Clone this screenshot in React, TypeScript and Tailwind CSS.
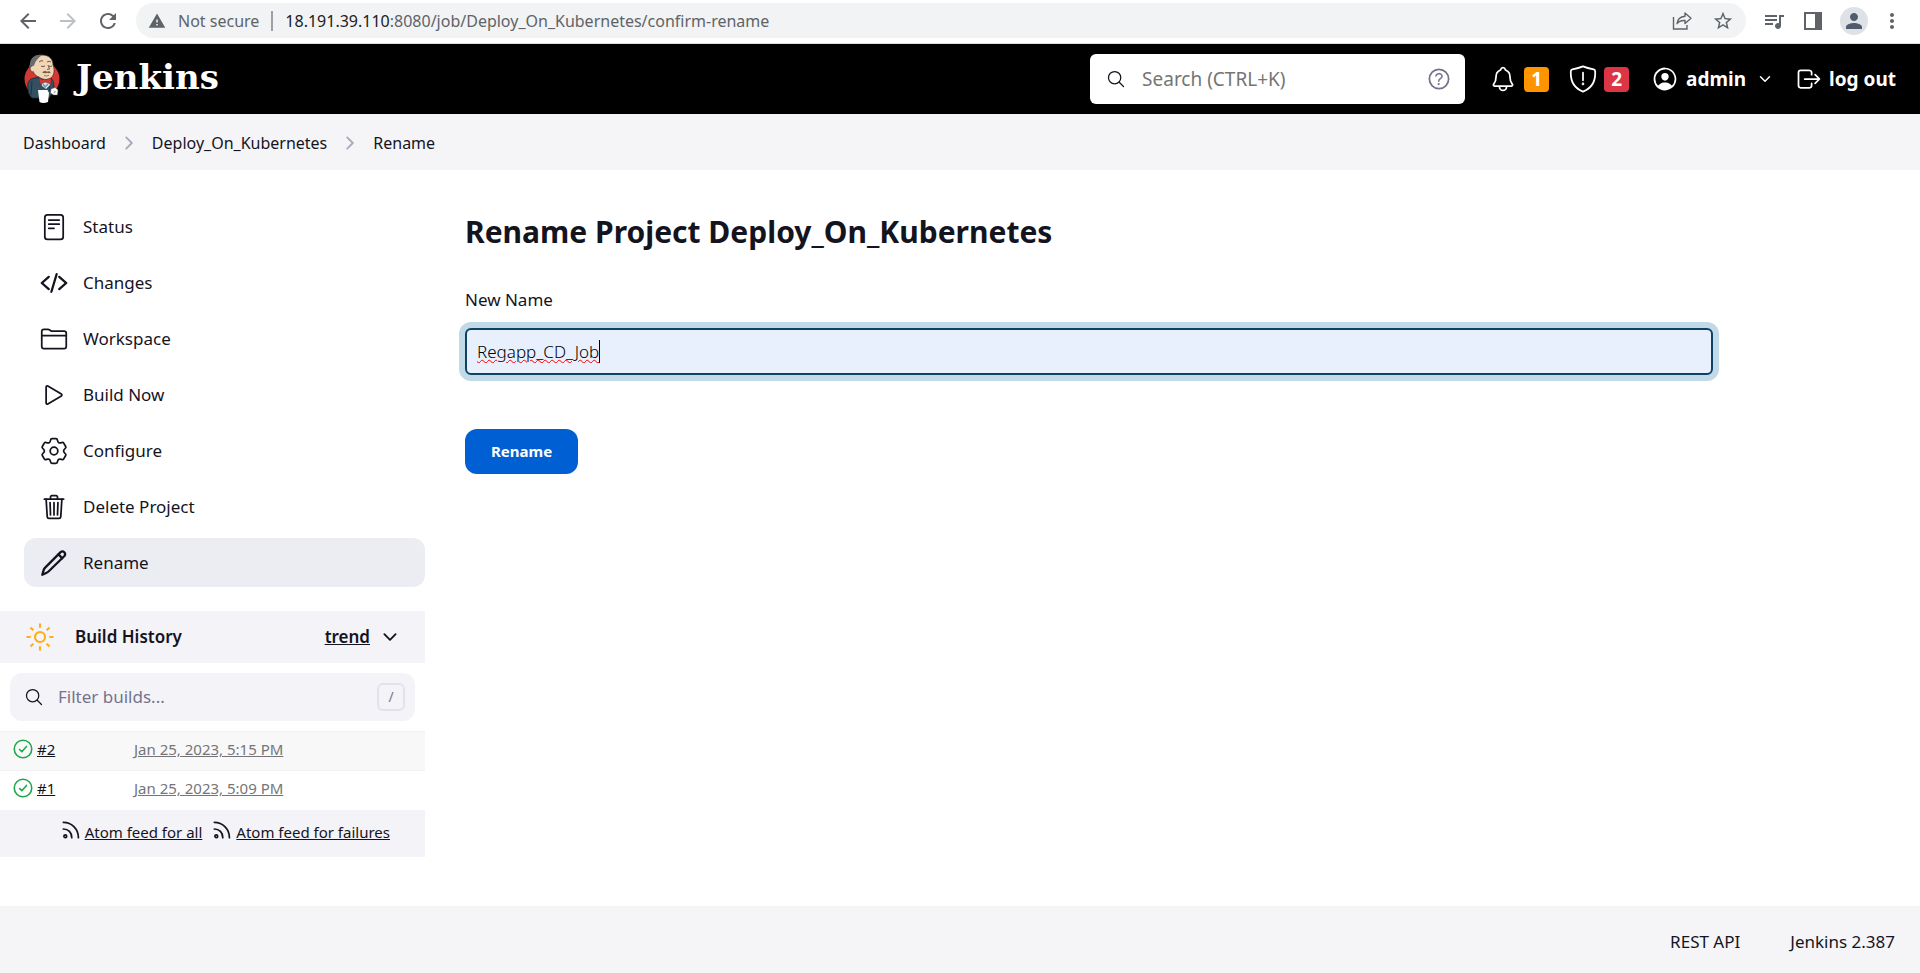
import React, { useState } from "react";
import { IoCodeSlash, IoPlayOutline, IoTrashOutline, IoFolderOutline, IoSearchOutline, IoHelpCircleOutline, IoNotificationsOutline, IoLogOutOutline, IoPersonCircleOutline } from "react-icons/io5";
import { MdArrowBack, MdArrowForward, MdRefresh, MdWarning, MdStarBorder, MdQueueMusic, MdPerson, MdMoreVert } from "react-icons/md";

type IconProps = { className?: string; children: React.ReactNode; width?: number };

function Line({ className = "size-7", children, width = 32 }: IconProps) {
  return (
    <svg viewBox="0 0 512 512" className={className} fill="none" stroke="currentColor" strokeWidth={width} strokeLinecap="round" strokeLinejoin="round" aria-hidden="true">
      {children}
    </svg>
  );
}

const StatusIcon = () => (
  <Line className="size-7">
    <rect x="88" y="32" width="336" height="448" rx="48" />
    <path d="M160 128h192M160 204h192M160 280h96" />
  </Line>
);

// Six identical teeth, each one drawn by rotating the same points around the centre.
function gearPath() {
  let d = "";
  for (let k = 0; k < 6; k++) {
    const a = (k * Math.PI) / 3;
    const p = (x: number, y: number) => `${(256 + x * Math.cos(a) - y * Math.sin(a)).toFixed(1)} ${(256 + x * Math.sin(a) + y * Math.cos(a)).toFixed(1)}`;
    d += `${k === 0 ? "M" : "L"}${p(-64, -196)}Q${p(-60, -226)} ${p(-36, -226)}L${p(36, -226)}Q${p(60, -226)} ${p(64, -196)}Q${p(75, -130)} ${p(137.7, -153.4)}`;
  }
  return d + "Z";
}

const GearIcon = () => (
  <Line className="size-7">
    <circle cx="256" cy="256" r="70" />
    <path d={gearPath()} />
  </Line>
);

const PencilIcon = () => (
  <Line className="size-7" width={42}>
    <path d="M42 470l26-88c5-16 11-26 22-37L372 62c22-20 54-20 72-2 18 20 18 50-2 72L156 412c-11 11-20 17-34 22z" />
    <path d="M338 98l68 70" />
  </Line>
);

const SunIcon = () => (
  <Line className="size-7 text-[#ffae12]" width={38}>
    <circle cx="256" cy="256" r="92" />
    <path strokeLinecap="butt" d="M256 10v76M256 426v76M502 256h-76M86 256H10M430 82l-52 52M134 378l-52 52M430 430l-52-52M134 134L82 82" />
  </Line>
);

const RssIcon = () => (
  <Line className="mb-1 size-5" width={44}>
    <circle cx="110" cy="416" r="36" />
    <path d="M60 230c130 0 216 92 216 222M60 60c220 0 386 172 386 392" />
  </Line>
);

const CheckIcon = () => (
  <Line className="size-5 shrink-0 text-[#1ea64b]" width={40}>
    <circle cx="256" cy="256" r="224" />
    <path d="M346 190L226 324l-58-54" />
  </Line>
);

const Chevron = ({ className, right }: { className: string; right?: boolean }) => (
  <Line className={className} width={48}>
    <path d={right ? "M184 112l144 144-144 144" : "M112 184l144 144 144-144"} />
  </Line>
);

const ShieldIcon = () => (
  <Line className="size-7" width={32}>
    <path d="M478 108c-3-18-12-27-28-30C356 62 314 50 256 26 198 50 156 62 62 78c-16 3-25 12-28 30-14 210 66 318 222 378 156-60 236-168 222-378z" />
    <path d="M256 140v140" />
    <circle cx="256" cy="346" r="8" fill="currentColor" />
  </Line>
);

const ShareIcon = () => (
  <svg viewBox="0 0 20 20" className="size-5" fill="none" stroke="currentColor" strokeWidth="1.4" aria-hidden="true">
    <path d="M1.5 6v12h13.500v-4" />
    <path strokeLinejoin="round" d="M13 2l6 5.300-6 5.300V9.500c-4-.2-6.500.8-8 3.200.4-4.300 3-7 8-7.500z" />
  </svg>
);

const PanelIcon = () => (
  <svg viewBox="0 0 18 18" className="size-[18px]" fill="currentColor" aria-hidden="true">
    <path d="M0 0h18v18H0zM2 2v14h9V2z" fillRule="evenodd" />
  </svg>
);

function JenkinsMascot() {
  return (
    <svg viewBox="0 0 36 50" className="h-[50px] w-9" aria-hidden="true">
      <circle cx="18" cy="25" r="17.500" fill="#d33833" />
      <path d="M7 25c-3 2-4 6-3 9 0 4 1 7 4 10l17 0 5-8c0-5 0-9-3-12l-9-2z" fill="#335061" stroke="#1b2b38" strokeWidth=".8" />
      <path d="M8 27l-1 14M25 30l1 8" stroke="#1b2b38" strokeWidth=".8" />
      <path d="M17 26l8 0 1 5-4 4-4-3z" fill="#d7e4ea" />
      <path d="M6 11C7 5 12 1 18 1c7 0 11 4 11 10 2 5 1 10-2 13-3 2-8 2-12-1-3-1-5-3-6-6-3 0-4-3-3-6z" fill="#f0d6b7" stroke="#4a3b34" strokeWidth=".7" />
      <path d="M18 1C12 0 7 3 6 9c-.5 4 0 6 1.500 7 0-3 1-5 2.500-4C11 8 13 5 18 1z" fill="#6b6a6d" />
      <path d="M8 12c-3 1-2 6 1.500 6" fill="#f0d6b7" stroke="#4a3b34" strokeWidth=".7" />
      <path d="M15 8q2-2 4-1M23 8q2-1.500 4 0M17 12q2 1.200 4 0M25 12q1 1 3 0M24 11l1.500 4-2.500.5" fill="none" stroke="#4a3b34" strokeWidth=".8" />
      <path d="M18 18.500q3-2.500 5-.8 2-1 4 .8-2.500 1.200-4 .3-2 1.200-5-.3z" fill="#7c5a46" />
      <path d="M20 21.500q2.500 1.200 5-.2" fill="none" stroke="#8d5b49" strokeWidth=".8" />
      <path d="M15 24l5 2.500 7-2.500v6l-6-2-5 2.500z" fill="#d33833" stroke="#81201e" strokeWidth=".5" />
      <path d="M19 30l2 3 3-3" fill="none" stroke="#6d9bb3" strokeWidth="1.500" />
      <path d="M14 36h9.500l1.500 3-1 9q-5 2-8.500 0z" fill="#fff" />
      <path d="M27 35l4-1.500 3 2.500-.5 5-4 0-3-2z" fill="#fff" stroke="#555" strokeWidth=".5" />
      <path d="M30 36.500l1.500 1.500-2 1" fill="none" stroke="#555" strokeWidth=".6" />
    </svg>
  );
}

const tasks = [
  { label: "Status", icon: <StatusIcon /> },
  { label: "Changes", icon: <IoCodeSlash className="size-7" /> },
  { label: "Workspace", icon: <IoFolderOutline className="size-7" /> },
  { label: "Build Now", icon: <IoPlayOutline className="size-7" /> },
  { label: "Configure", icon: <GearIcon /> },
  { label: "Delete Project", icon: <IoTrashOutline className="size-7" /> },
  { label: "Rename", icon: <PencilIcon />, active: true },
];

const builds = [
  { id: "#2", date: "Jan 25, 2023, 5:15 PM", row: "bg-[#f8f8f8]" },
  { id: "#1", date: "Jan 25, 2023, 5:09 PM", row: "bg-white" },
];

function BrowserBar() {
  return (
    <div className="flex h-11 items-center border-b border-[#dadce0] px-4 pb-0.5 text-[#5f6368]">
      <div className="flex gap-4 pr-4">
        <button aria-label="Back"><MdArrowBack className="size-6" /></button>
        <button aria-label="Forward" className="text-[#bdc1c6]"><MdArrowForward className="size-6" /></button>
        <button aria-label="Reload"><MdRefresh className="size-6" /></button>
      </div>
      <div className="flex h-[35px] min-w-0 grow items-center rounded-full bg-[#f1f3f4] px-3">
        <MdWarning className="mr-3 size-[18px] shrink-0" />
        <span className="whitespace-nowrap text-base">Not secure</span>
        <span className="mx-3 h-5 w-0.5 shrink-0 bg-[#9aa0a6]" />
        <span className="grow truncate text-base"><span className="text-[#202124]">18.191.39.110</span>:8080/job/Deploy_On_Kubernetes/confirm-rename</span>
        <div className="flex gap-5">
          <button aria-label="Share"><ShareIcon /></button>
          <button aria-label="Bookmark"><MdStarBorder className="size-[22px]" /></button>
        </div>
      </div>
      <div className="flex items-center gap-[18px] pl-4">
        <button aria-label="Media"><MdQueueMusic className="size-6" /></button>
        <button aria-label="Side panel"><PanelIcon /></button>
        <button aria-label="Profile" className="flex size-7 items-center justify-center rounded-full bg-[#dee1e6] text-[#4f5b6e]"><MdPerson className="size-6" /></button>
        <button aria-label="Menu" className="-ml-1.5"><MdMoreVert className="size-6" /></button>
      </div>
    </div>
  );
}

function Header() {
  return (
    <header className="flex h-[70px] items-center bg-black px-6 text-white">
      <a href="#" className="flex items-center gap-4">
        <JenkinsMascot />
        <span className="pb-1 font-['DejaVu_Serif',serif] text-[34px] leading-[46px] font-bold">Jenkins</span>
      </a>
      <div className="ml-auto flex h-[50px] w-[375px] items-center rounded-md bg-white px-3 text-[#14141f]">
        <IoSearchOutline className="mr-4 ml-1 size-5 shrink-0" />
        <input aria-label="Search" placeholder="Search (CTRL+K)" className="min-w-0 grow text-[19px] outline-none placeholder:text-[#757575]" />
        <a href="#" aria-label="Help" className="text-[#73738c]"><IoHelpCircleOutline className="size-7" /></a>
      </div>
      <a href="#" className="ml-6 flex items-center gap-[7px]">
        <IoNotificationsOutline className="size-7" />
        <span className="flex size-[25px] items-center justify-center rounded bg-[#fe9500] text-[19px] font-bold">1</span>
      </a>
      <a href="#" className="ml-5 flex items-center gap-[7px]">
        <ShieldIcon />
        <span className="flex size-[25px] items-center justify-center rounded bg-[#dc3545] text-[19px] font-bold">2</span>
      </a>
      <a href="#" className="ml-[22px] flex items-center gap-[7px] text-[19px] font-bold">
        <IoPersonCircleOutline className="size-7" />
        admin
        <Chevron className="ml-1 size-4" />
      </a>
      <a href="#" className="ml-[22px] flex items-center gap-1.5 text-[19px] font-bold">
        <IoLogOutOutline className="size-7" />
        log out
      </a>
    </header>
  );
}

function Sidebar() {
  return (
    <aside className="w-[425px] shrink-0">
      <nav className="flex flex-col gap-[7px] pt-8 pl-6">
        {tasks.map((t) => (
          <a key={t.label} href="#" className={t.active ? "flex h-[49px] items-center gap-[15px] rounded-xl bg-[#ecedf3] pl-4" : "flex h-[49px] items-center gap-[15px] rounded-xl pl-4"}>
            {t.icon}
            <span className="text-[17px]">{t.label}</span>
          </a>
        ))}
      </nav>
      <section className="mt-6">
        <div className="flex h-[52px] items-center bg-[#f3f3f8] pr-[25px] pl-[26px] text-[17px] font-semibold">
          <SunIcon />
          <h2 className="ml-[21px] grow">Build History</h2>
          <a href="#" className="underline">trend</a>
          <button aria-label="Collapse" className="ml-2.5"><Chevron className="size-5" /></button>
        </div>
        <div className="mx-2.5 mt-2.5 mb-2.5 flex h-12 items-center rounded-xl bg-[#f3f3f8] px-2.5">
          <IoSearchOutline className="mr-3.5 ml-1 size-5 shrink-0" />
          <input aria-label="Filter builds" placeholder="Filter builds..." className="min-w-0 grow text-[17px] outline-none placeholder:text-[#73738c]" />
          <kbd className="flex size-7 items-center justify-center rounded-md border-2 border-[#e2e2ec] font-sans text-sm text-[#73738c]">/</kbd>
        </div>
        <table className="w-full text-[15px]">
          <tbody>
            {builds.map((b) => (
              <tr key={b.id} className={b.row}>
                <td className="h-[39px] w-[134px] border-t border-[#f1f1f3] pb-1 pl-[13px]">
                  <a href="#" className="flex items-center gap-1"><CheckIcon /><span className="underline">{b.id}</span></a>
                </td>
                <td className="border-t border-[#f1f1f3] pb-1"><a href="#" className="text-[#757579] underline">{b.date}</a></td>
              </tr>
            ))}
          </tbody>
        </table>
        <div className="flex h-[47px] items-center justify-end gap-2.5 bg-[#f3f3f8] pr-[35px] pb-0.5 text-[15px]">
          <a href="#" className="flex items-center gap-1"><RssIcon /><span className="underline">Atom feed for all</span></a>
          <a href="#" className="flex items-center gap-1"><RssIcon /><span className="underline">Atom feed for failures</span></a>
        </div>
      </section>
    </aside>
  );
}

export default function App() {
  const [name, setName] = useState("Regapp_CD_Job");
  return (
    <div className="flex min-h-screen flex-col bg-white font-['Noto_Sans',sans-serif] text-[#14141f]">
      <BrowserBar />
      <Header />
      <nav aria-label="Breadcrumbs" className="flex h-14 items-center bg-[#f5f5f8] px-[23px] pt-0.5 text-base">
        <a href="#">Dashboard</a>
        <Chevron right className="mx-[13px] size-5 text-[#aaaabb]" />
        <a href="#">Deploy_On_Kubernetes</a>
        <Chevron right className="mx-[13px] size-5 text-[#aaaabb]" />
        <a href="#">Rename</a>
      </nav>
      <div className="flex grow">
        <Sidebar />
        <main className="min-w-0 grow pt-10 pl-10">
          <h1 className="text-3xl leading-[44px] font-bold">Rename Project Deploy_On_Kubernetes</h1>
          <form onSubmit={(e) => e.preventDefault()}>
            <label htmlFor="new-name" className="mt-8 block text-[17px] leading-7">New Name</label>
            <div className="relative mt-3.5 mr-[207px] text-[17px] font-light">
              <input
                id="new-name"
                value={name}
                onChange={(e) => setName(e.target.value)}
                className="h-[47px] w-full rounded-md border-2 border-[#0b4365] bg-[#e8effd] px-2.5 text-black underline decoration-[#f00] decoration-wavy decoration-1 shadow-[0_0_0_6px_#c2d9e7] outline-none"
              />
              <span className="pointer-events-none absolute inset-y-3 left-3 flex border-r border-black" aria-hidden="true"><span className="invisible">{name}</span></span>
            </div>
            <button type="submit" className="mt-[54px] h-[45px] rounded-xl bg-[#0060d3] px-[26px] text-[15px] font-bold text-white">Rename</button>
          </form>
        </main>
      </div>
      <footer className="flex h-[67px] items-center justify-end gap-[50px] bg-[#f5f5f8] px-[25px] pt-1 text-[17px]">
        <a href="#">REST API</a>
        <a href="#">Jenkins 2.387</a>
      </footer>
    </div>
  );
}
